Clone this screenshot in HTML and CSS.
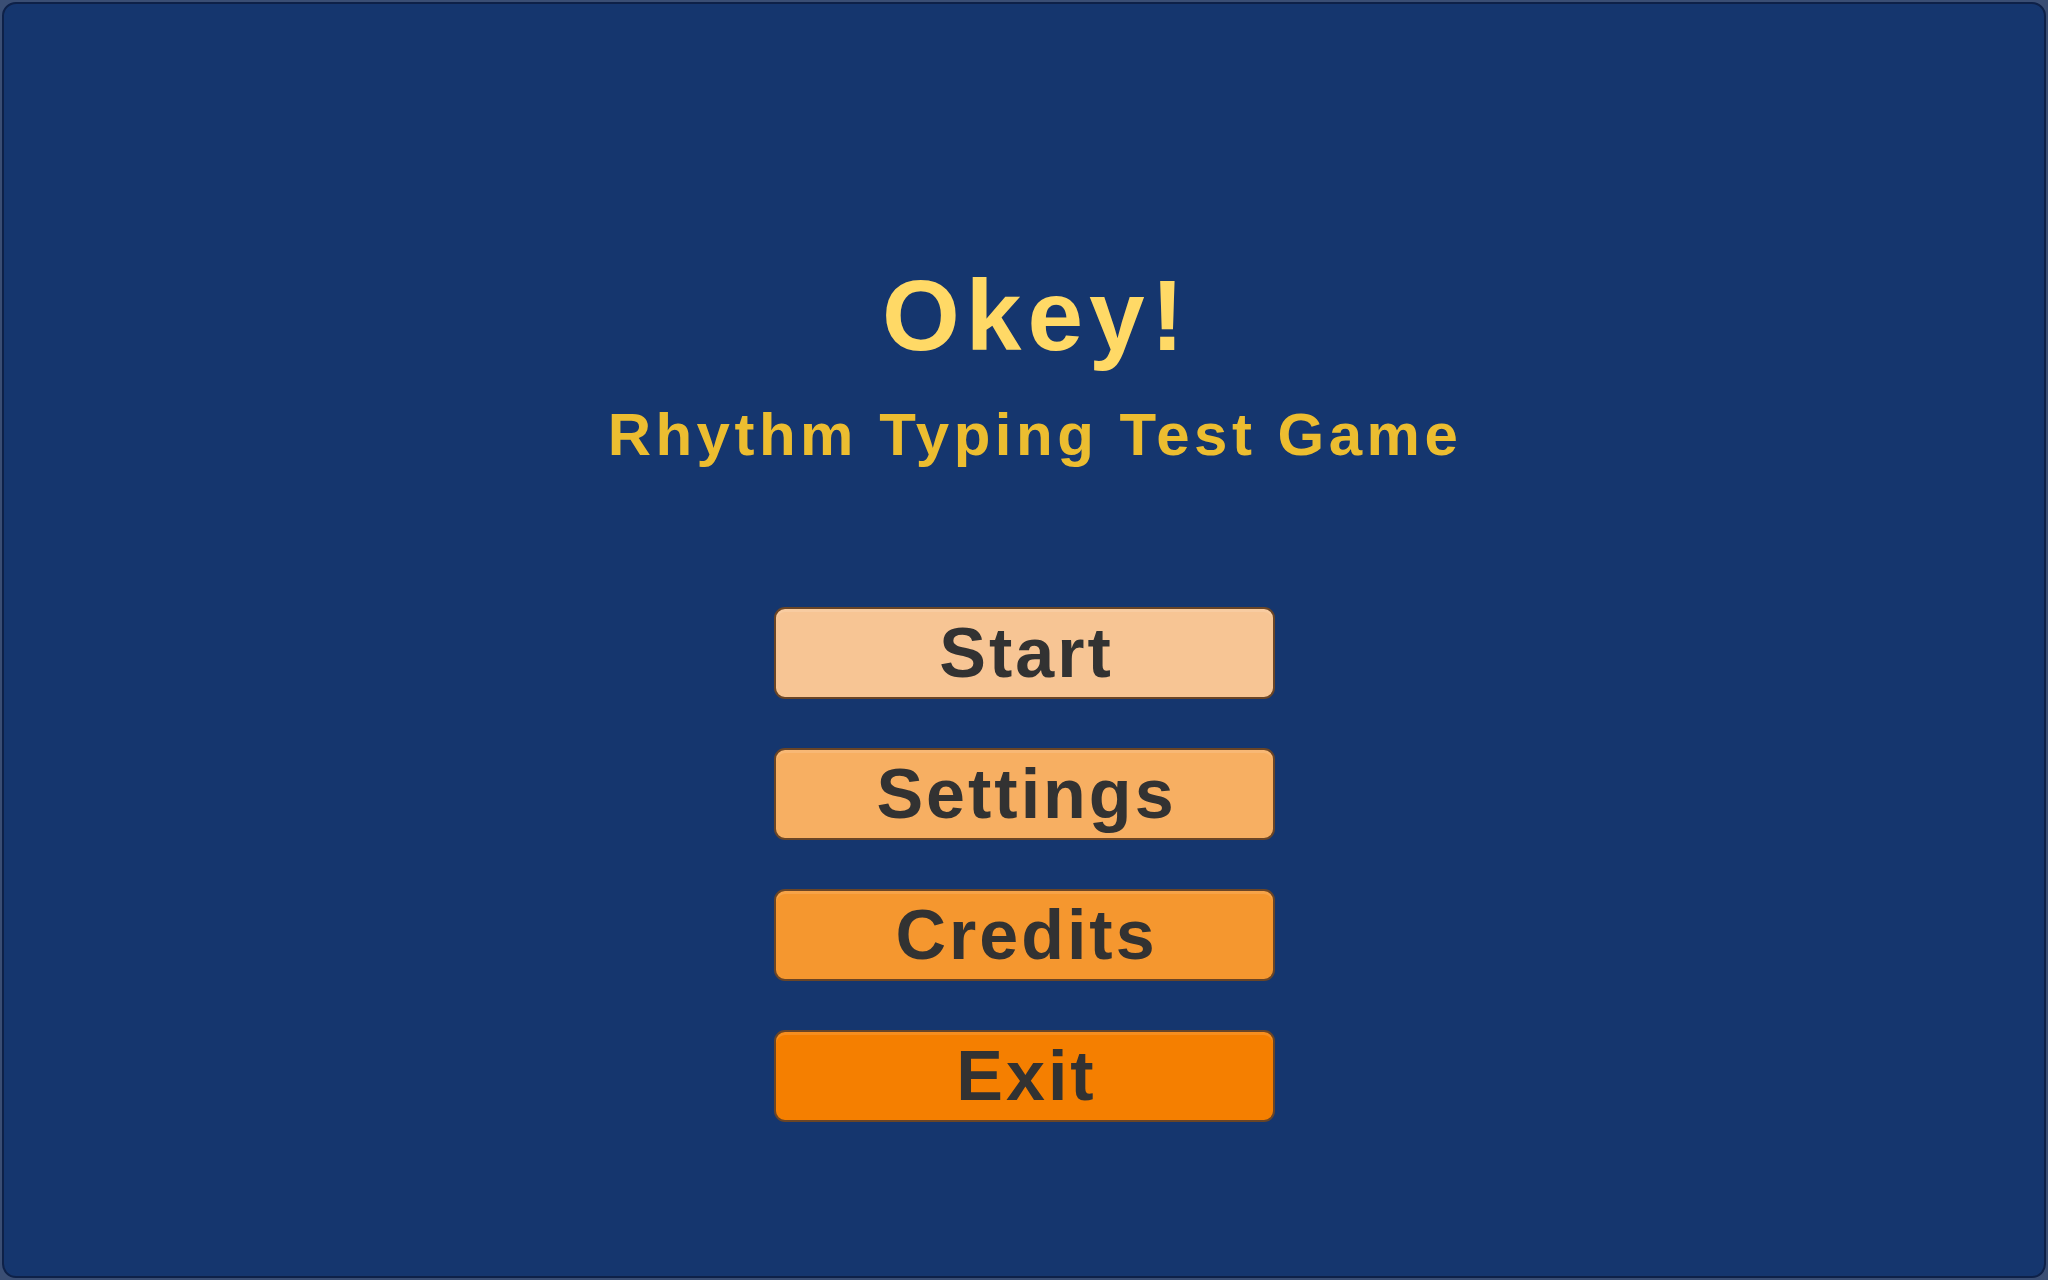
FILE: index.html
```html
<!DOCTYPE html>
<html lang="en">
<head>
<meta charset="utf-8">
<title>Okey! - Rhythm Typing Test Game</title>
<link rel="stylesheet" href="styles.css">
</head>
<body>
<div class="panel">
  <h1 class="title">Okey!</h1>
  <h2 class="subtitle">Rhythm Typing Test Game</h2>
  <nav class="menu">
    <button class="btn btn-start">Start</button>
    <button class="btn btn-settings">Settings</button>
    <button class="btn btn-credits">Credits</button>
    <button class="btn btn-exit">Exit</button>
  </nav>
</div>
</body>
</html>
```

FILE: styles.css
```css
html, body {
  margin: 0;
  padding: 0;
  height: 100%;
}
body {
  background: #3a4e74;
  font-family: "Liberation Sans", Arial, sans-serif;
  padding: 2px;
  box-sizing: border-box;
}
.panel {
  box-sizing: border-box;
  height: 100%;
  background: #15366e;
  border: 2px solid #0e2148;
  border-radius: 14px;
  display: flex;
  flex-direction: column;
  align-items: center;
  padding-top: 261px;
}
.title {
  margin: 0;
  font-size: 100px;
  line-height: 100px;
  font-weight: bold;
  color: #ffd966;
  letter-spacing: 6px;
  padding-left: 24px;
}
.subtitle {
  margin: 40px 0 0;
  font-size: 60px;
  line-height: 60px;
  font-weight: bold;
  color: #ecbd30;
  letter-spacing: 4.5px;
  padding-left: 22px;
}
.menu {
  margin-top: 142px;
  display: flex;
  flex-direction: column;
  gap: 49px;
}
.btn {
  box-sizing: border-box;
  width: 501px;
  height: 92px;
  border: 2px solid #6a4526;
  border-radius: 11px;
  box-shadow: inset 0 3px 0 rgba(255, 255, 255, 0.12);
  font-family: "Liberation Sans", Arial, sans-serif;
  font-weight: bold;
  font-size: 70px;
  line-height: 86px;
  letter-spacing: 3px;
  padding: 0 0 0 5px;
  color: #323232;
  text-align: center;
}
.btn-start { background: #f7c594; }
.btn-settings { background: #f7af62; }
.btn-credits { background: #f5972f; }
.btn-exit { background: #f57f00; }
```
